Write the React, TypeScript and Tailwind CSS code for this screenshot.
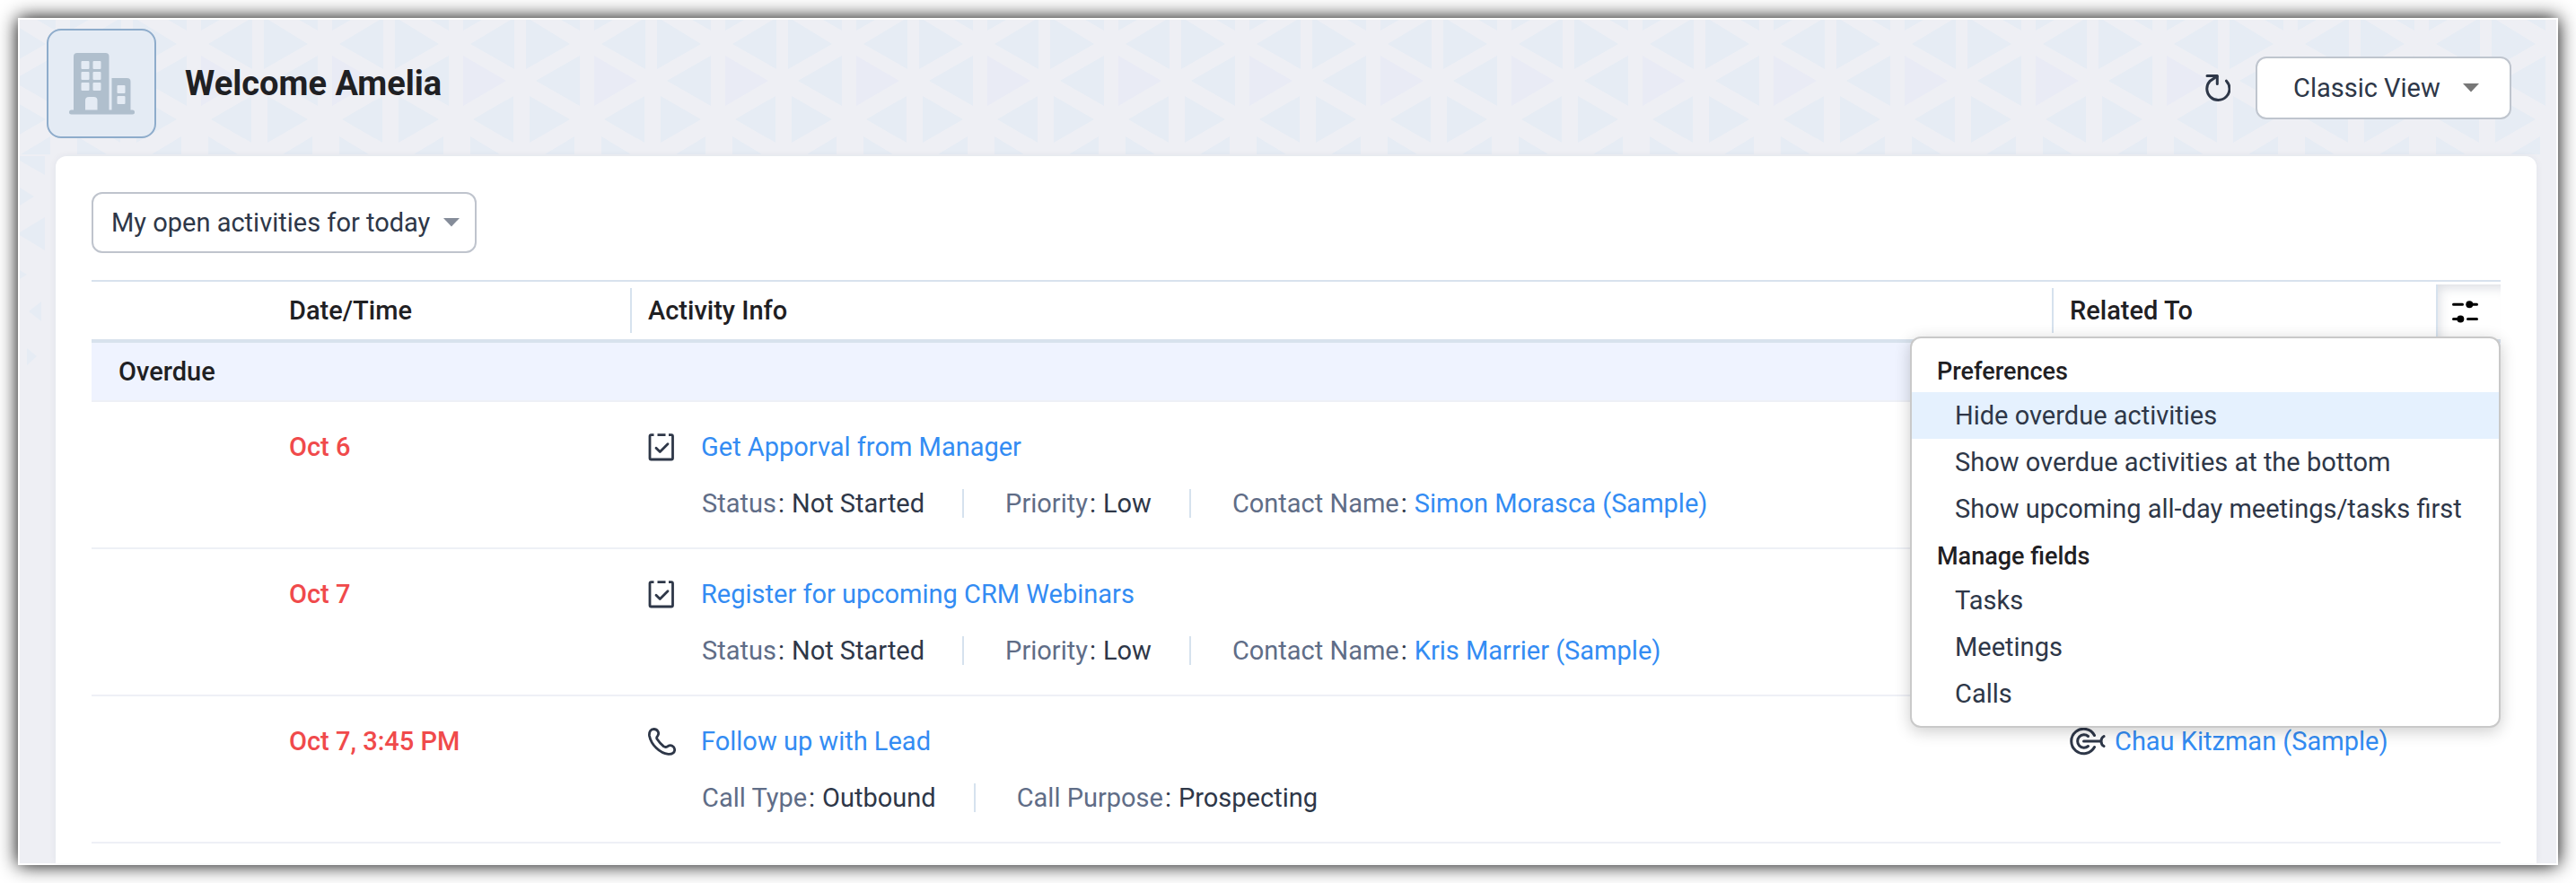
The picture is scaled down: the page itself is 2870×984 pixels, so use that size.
import { useState } from "react";
import type { ReactNode } from "react";

type Field = { label: string; value: string; link?: boolean };

type Activity = {
  date: string;
  kind: "task" | "call";
  title: string;
  fields: Field[];
  related?: string;
};

const activities: Activity[] = [
  {
    date: "Oct 6",
    kind: "task",
    title: "Get Apporval from Manager",
    fields: [
      { label: "Status", value: "Not Started" },
      { label: "Priority", value: "Low" },
      { label: "Contact Name", value: "Simon Morasca (Sample)", link: true },
    ],
  },
  {
    date: "Oct 7",
    kind: "task",
    title: "Register for upcoming CRM Webinars",
    fields: [
      { label: "Status", value: "Not Started" },
      { label: "Priority", value: "Low" },
      { label: "Contact Name", value: "Kris Marrier (Sample)", link: true },
    ],
  },
  {
    date: "Oct 7, 3:45 PM",
    kind: "call",
    title: "Follow up with Lead",
    fields: [
      { label: "Call Type", value: "Outbound" },
      { label: "Call Purpose", value: "Prospecting" },
    ],
    related: "Chau Kitzman (Sample)",
  },
];

const menu = [
  {
    heading: "Preferences",
    items: [
      "Hide overdue activities",
      "Show overdue activities at the bottom",
      "Show upcoming all-day meetings/tasks first",
    ],
  },
  { heading: "Manage fields", items: ["Tasks", "Meetings", "Calls"] },
];

function TrianglePattern() {
  return (
    <svg className="absolute inset-0 h-full w-full" aria-hidden="true">
      <defs>
        <pattern id="triangles" x="-42" y="0" width="146" height="152" patternUnits="userSpaceOnUse">
          <g fill="#e6ecf4">
            <path d="M61 0H82V12Z" />
            <path d="M98 0H119L98 12Z" />
            <path d="M22 0H27L71 27L22 55Z" />
            <path d="M155 0V55L106 27L151 0Z" />
            <path d="M9 0V55L0 50V3L5 0Z" />
            <path d="M82 40V96L33 68Z" />
            <path d="M26 85V137L71 111Z" />
            <path d="M154 85V137L109 111Z" />
            <path d="M8 85V137L0 132V90Z" />
            <path d="M76 130V150H43Z" />
            <path d="M106 130V150H139Z" />
          </g>
          <path fill="#e9ebf5" d="M98 40V96L146 68Z" />
        </pattern>
      </defs>
      <rect width="100%" height="152" fill="url(#triangles)" />
      <g fill="#e6ecf4">
        <path d="M28 152V173L0 157V152Z" />
        <path d="M0 187L16 197L0 207Z" />
        <path d="M28 220V257L0 240V237Z" />
        <path d="M0 279L8 284L0 289Z" />
        <path d="M24 314V336L10 325Z" />
        <path d="M8 366V385L19 375Z" />
      </g>
    </svg>
  );
}

function BuildingIcon() {
  return (
    <svg width="73" height="69" viewBox="0 0 73 69" aria-hidden="true">
      <g fill="#b0bfcd">
        <path d="M5 65V4a4 4 0 0 1 4-4h31.500a4 4 0 0 1 4 4v61z" />
        <path d="M47.500 65V28H64.500a4 4 0 0 1 4 4v33z" />
        <rect y="63.500" width="73" height="5" rx="2.500" />
      </g>
      <g fill="#e4ebf4">
        <rect x="13.500" y="9" width="9" height="9" rx="1" />
        <rect x="26.500" y="9" width="9" height="9" rx="1" />
        <rect x="13.500" y="21" width="9" height="9" rx="1" />
        <rect x="26.500" y="21" width="9" height="9" rx="1" />
        <rect x="13.500" y="33" width="9" height="9" rx="1" />
        <rect x="26.500" y="33" width="9" height="9" rx="1" />
        <rect x="53.500" y="36" width="9" height="9" rx="1" />
        <rect x="53.500" y="48" width="9" height="9" rx="1" />
        <path d="M18 63.500V53a4 4 0 0 1 4-4h5.500a4 4 0 0 1 4 4v10.500z" />
      </g>
    </svg>
  );
}

function RefreshIcon() {
  return (
    <svg width="28" height="31" viewBox="0 0 28 31" fill="none" stroke="currentColor" strokeWidth="3" strokeLinecap="round" aria-hidden="true">
      <path d="M23.500 7.200A12.600 12.600 0 1 1 5 7.500L13 2" />
      <path d="M2 1.500H13.300V10.500" strokeLinejoin="round" />
    </svg>
  );
}

function SlidersIcon() {
  return (
    <svg width="30" height="25" viewBox="0 0 30 25" stroke="black" strokeWidth="3" strokeLinecap="round" aria-hidden="true">
      <path d="M1.500 4.200H11.500M19 4.200H27.500M1.500 20.400H9M17.500 20.400H27.500" />
      <circle cx="19.300" cy="4.200" r="4" stroke="none" />
      <circle cx="9.300" cy="20.400" r="4" stroke="none" />
    </svg>
  );
}

function TaskIcon() {
  return (
    <svg width="30" height="31" viewBox="0 0 30 31" fill="none" stroke="currentColor" strokeWidth="2.800" strokeLinejoin="round" aria-hidden="true">
      <path d="M6.500 1.700H3.500A1.500 1.500 0 0 0 2 3.200V27.500A1.500 1.500 0 0 0 3.500 29H26A1.500 1.500 0 0 0 27.500 27.500V3.200A1.500 1.500 0 0 0 26 1.700H23M10.500 1.700H19.500" />
      <path d="M9 16.200L13.300 20.400L22 11.800" strokeLinecap="round" />
    </svg>
  );
}

function CallIcon() {
  return (
    <svg width="31" height="31" viewBox="0 0 31 31" fill="none" stroke="currentColor" strokeWidth="2.800" strokeLinejoin="round" aria-hidden="true">
      <path d="M6.500 1.500C3 1.500 1 4.500 1.500 9C3.500 19 13 28.500 22.500 29.300C27 29.700 30 27.500 29.600 24C29.200 20.500 25.500 18.500 22.500 20.300C20.500 21.600 19.500 22.500 17.500 20.800C15 18.800 12 15.500 10 12.500C9 11 9.800 10 10.800 8.800C13 5.500 10.500 1.500 6.500 1.500Z" />
    </svg>
  );
}

function LeadIcon() {
  return (
    <svg width="40" height="32" viewBox="0 0 40 32" fill="none" stroke="currentColor" strokeWidth="3" strokeLinecap="round" aria-hidden="true">
      <path d="M27.500 9.500A13.700 13.700 0 1 0 27.500 22.500" />
      <path d="M20.500 10.500A7.200 7.200 0 1 0 20.500 21.500" />
      <path d="M15.500 16H34M38 10.500C34 12.500 34 19.500 38 21.500" />
    </svg>
  );
}

function Caret({ className }: { className: string }) {
  return (
    <svg className={className} width="18" height="10" viewBox="0 0 18 10" fill="currentColor" aria-hidden="true">
      <path d="M0 0H18L9 9.500Z" />
    </svg>
  );
}

function ColumnTitle({ children }: { children: ReactNode }) {
  return (
    <div className="flex h-[50px] items-center border-l-2 border-[#d6e2ee] pl-[18px]">
      {children}
    </div>
  );
}

export default function App() {
  const [menuOpen, setMenuOpen] = useState(true);
  const [active, setActive] = useState("Hide overdue activities");

  return (
    <div className="bg-white p-5 font-['Roboto',sans-serif] text-[29px] leading-9 text-[#2e3748]">
      <main className="relative border-2 border-white bg-[#eeeff4] shadow-[0_0_20px_#000]">
        <TrianglePattern />

        <header className="relative flex items-center justify-between pt-[10px] pr-[50px] pb-5 pl-[30px]">
          <div className="flex items-center gap-8">
            <div className="flex size-[122px] items-center justify-center rounded-2xl border-2 border-[#8eaccb] bg-[#e4ebf4]">
              <BuildingIcon />
            </div>
            <h1 className="text-[38px] font-bold text-[#1f2023]">Welcome Amelia</h1>
          </div>

          <div className="flex items-center gap-7 pt-[10px]">
            <button type="button" aria-label="Refresh">
              <RefreshIcon />
            </button>
            <div className="relative">
              <select
                aria-label="View"
                className="h-[70px] w-[285px] appearance-none rounded-xl border-2 border-[#bfc5ce] bg-white pl-10"
              >
                <option>Classic View</option>
              </select>
              <Caret className="pointer-events-none absolute top-[30px] right-9 text-[#777777]" />
            </div>
          </div>
        </header>

        <section className="relative mr-[22px] ml-10 rounded-t-xl bg-white px-10 pt-10 pb-[22px] shadow-[0_0_8px_rgba(30,50,90,0.06)]">
          <div className="relative inline-block align-top">
            <select
              aria-label="Activity filter"
              className="h-[68px] w-[429px] appearance-none rounded-xl border-2 border-[#bfc4cd] bg-white pl-5"
            >
              <option>My open activities for today</option>
            </select>
            <Caret className="pointer-events-none absolute top-[29px] right-[19px] text-[#858c99]" />
          </div>

          <table className="mt-[30px] w-full table-fixed border-separate border-spacing-0 text-left">
            <colgroup>
              <col className="w-[600px]" />
              <col />
              <col className="w-[428px]" />
              <col className="w-[72px]" />
            </colgroup>
            <thead>
              <tr className="text-[#1f2023] [&>th]:border-t-2 [&>th]:border-b-4 [&>th]:border-[#d8e2ed] [&>th]:p-0 [&>th]:font-medium">
                <th className="h-[70px]">
                  <div className="pl-[220px]">Date/Time</div>
                </th>
                <th>
                  <ColumnTitle>Activity Info</ColumnTitle>
                </th>
                <th>
                  <ColumnTitle>Related To</ColumnTitle>
                </th>
                <th className="relative align-bottom">
                  <button
                    type="button"
                    aria-label="Preferences"
                    aria-expanded={menuOpen}
                    onClick={() => setMenuOpen(!menuOpen)}
                    className="flex h-[61px] w-full items-center border-l-2 border-[#d6e2ee] pl-4 shadow-[inset_6px_8px_12px_-4px_rgba(40,50,80,0.16)]"
                  >
                    <SlidersIcon />
                  </button>
                  {menuOpen && (
                    <div
                      role="menu"
                      className="absolute top-[61px] right-0 z-10 w-[658px] rounded-xl border-2 border-[#c9c9c9] bg-white py-[10px] font-normal text-[#2e3748] shadow-[0_4px_18px_rgba(0,0,0,0.2)]"
                    >
                      {menu.map((group) => (
                        <div key={group.heading}>
                          <div className="flex h-[50px] items-center pt-1 pl-7 text-[27px] font-medium text-[#1f2023]">
                            {group.heading}
                          </div>
                          {group.items.map((item) => (
                            <button
                              key={item}
                              type="button"
                              role="menuitem"
                              onMouseEnter={() => setActive(item)}
                              className={`block h-[52px] w-full pl-12 text-left ${
                                item === active ? "bg-[#e5f1fe]" : ""
                              }`}
                            >
                              {item}
                            </button>
                          ))}
                        </div>
                      ))}
                    </div>
                  )}
                </th>
              </tr>
            </thead>
            <tbody className="[&_td]:border-b-2 [&_td]:border-[#eef0f6]">
              <tr>
                <td colSpan={4} className="h-[66px] bg-[#eff3ff] pl-[30px] text-[29px] font-medium text-[#1f2023]">
                  Overdue
                </td>
              </tr>
              {activities.map((activity) => (
                <tr key={activity.title} className="align-top">
                  <td className="pt-8 pl-[220px] font-medium text-[#f04a4b]">{activity.date}</td>
                  <td className="pt-8 pb-[31px] pl-5">
                    <div className="flex items-center">
                      <span className="w-[59px]">
                        {activity.kind === "task" ? <TaskIcon /> : <CallIcon />}
                      </span>
                      <a href="#" className="text-[#338cf3]">
                        {activity.title}
                      </a>
                    </div>
                    <div className="mt-[27px] flex items-center pl-[60px]">
                      {activity.fields.map((field, i) => (
                        <div key={field.label} className="flex items-center">
                          {i > 0 && <span className="mr-[46px] ml-[42px] h-8 w-[2px] bg-[#d6e2ee]" />}
                          <span className="text-[#5f6d87]">{field.label}</span>
                          <span className="mr-2 ml-[2px]">:</span>
                          {field.link ? (
                            <a href="#" className="text-[#338cf3]">
                              {field.value}
                            </a>
                          ) : (
                            <span>{field.value}</span>
                          )}
                        </div>
                      ))}
                    </div>
                  </td>
                  <td colSpan={2} className="pt-8 pl-5">
                    {activity.related && (
                      <div className="flex items-center gap-[10px]">
                        <LeadIcon />
                        <a href="#" className="text-[#338cf3]">
                          {activity.related}
                        </a>
                      </div>
                    )}
                  </td>
                </tr>
              ))}
            </tbody>
          </table>
        </section>
      </main>
    </div>
  );
}
